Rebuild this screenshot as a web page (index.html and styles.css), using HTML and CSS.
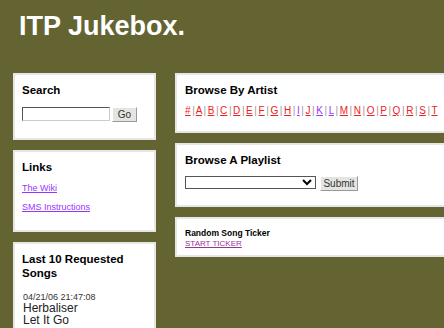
FILE: index.html
```html
<!DOCTYPE html>
<html lang="en">
<head>
    <meta charset="UTF-8">
    <title>ITP Jukebox.</title>
    <link rel="stylesheet" href="styles.css">
</head>
<body>
    <h1 class="site-title">ITP Jukebox.</h1>

    <div class="page">
        <!-- left column -->
        <div class="side">
            <div class="box search">
                <h2>Search</h2>
                <form class="search-form">
                    <input type="text" class="search-input">
                    <button type="button" class="btn">Go</button>
                </form>
            </div>

            <div class="box links">
                <h2>Links</h2>
                <p class="link-line"><a href="#" class="visited">The Wiki</a></p>
                <p class="link-line"><a href="#" class="visited">SMS Instructions</a></p>
            </div>

            <div class="box">
                <h2>Last 10 Requested Songs</h2>
                <div class="song">
                    <div class="song-date">04/21/06 21:47:08</div>
                    <div class="song-artist">Herbaliser</div>
                    <div class="song-title">Let It Go</div>
                </div>
            </div>
        </div>

        <!-- main column -->
        <div class="main">
            <div class="box artists">
                <h2>Browse By Artist</h2>
                <div class="letters">
                    <a href="#">#</a> | <a href="#">A</a> | <a href="#">B</a> | <a href="#">C</a> | <a href="#">D</a> | <a href="#">E</a> | <a href="#">F</a> | <a href="#">G</a> | <a href="#">H</a> | <a href="#" class="seen">I</a> | <a href="#">J</a> | <a href="#" class="seen">K</a> | <a href="#" class="seen">L</a> | <a href="#">M</a> | <a href="#">N</a> | <a href="#">O</a> | <a href="#">P</a> | <a href="#">Q</a> | <a href="#">R</a> | <a href="#">S</a> | <a href="#">T</a>
                </div>
            </div>

            <div class="box playlist">
                <h2>Browse A Playlist</h2>
                <form class="playlist-form">
                    <select class="playlist-select"><option></option></select>
                    <button type="button" class="btn">Submit</button>
                </form>
            </div>

            <div class="box ticker">
                <div class="ticker-title">Random Song Ticker</div>
                <a href="#" class="ticker-link">START TICKER</a>
            </div>
        </div>
    </div>
</body>
</html>
```

FILE: styles.css
```css
body {
    margin: 0;
    background-color: #646432;
    font-family: "Liberation Sans", Arial, sans-serif;
    overflow: hidden;
}

.site-title {
    margin: 0;
    padding: 10px 0 0 19px;
    height: 73px;
    box-sizing: border-box;
    font-size: 27px;
    line-height: 32px;
    color: #fff;
}

.page {
    display: flex;
    gap: 19px;
    padding-left: 13px;
    width: 620px;
}

.side {
    width: 143px;
    flex-shrink: 0;
}

.main {
    width: 400px;
    flex-shrink: 0;
}

.box {
    background-color: #fff;
    border: 2px solid #e6e6e6;
    box-sizing: border-box;
    padding: 8px 8px 14px 7px;
    margin-bottom: 10px;
}

.main .box {
    padding-left: 8px;
}

.box h2 {
    margin: 0;
    font-size: 11.5px;
    line-height: 14px;
    color: #000;
}

.search {
    height: 67px;
}

.search-form {
    display: flex;
    gap: 2px;
    margin-top: 10px;
}

.search-input {
    width: 88px;
    height: 14px;
    box-sizing: border-box;
    padding: 0;
    border: 1px solid #555;
    border-right-color: #ccc;
    border-bottom-color: #ccc;
}

.btn {
    font-family: "Liberation Sans", Arial, sans-serif;
    font-size: 10px;
    color: #333;
    padding: 0 5px;
    height: 15px;
    background-color: #e4e4e0;
    border: 1px solid #999;
    border-top-color: #fff;
    border-left-color: #fff;
    border-radius: 0;
}

.search-form .btn {
    width: 25px;
    padding: 0;
}

.links {
    height: 82px;
}

.link-line {
    margin: 9px 0 0 0;
    font-size: 9px;
}

.link-line + .link-line {
    margin-top: 9px;
}

.visited {
    color: #9933ff;
}

.song {
    margin-top: 13px;
    padding-left: 1px;
}

.song-date {
    font-size: 9px;
    line-height: 9px;
    color: #333;
}

.song-artist,
.song-title {
    font-size: 12px;
    line-height: 12px;
    color: #222;
}

.artists {
    height: 60px;
}

.letters {
    margin-top: 8px;
    font-size: 10px;
    word-spacing: -1.2px;
    color: #999;
    white-space: nowrap;
}

.letters a {
    color: #ee2222;
}

.letters a.seen {
    color: #9933ff;
}

.playlist {
    height: 64px;
}

.playlist-form {
    display: flex;
    gap: 4px;
    margin-top: 9px;
}

.playlist-select {
    width: 131px;
    height: 13px;
    padding: 0;
    font-size: 9px;
    border: 1px solid #555;
    background-color: #fff;
}

.playlist-form .btn {
    width: 38px;
    padding: 0;
    height: 15px;
}

.ticker {
    height: 40px;
    padding-top: 9px;
    font-size: 8.5px;
    line-height: 10px;
}

.ticker-title {
    font-weight: bold;
    color: #000;
}

.ticker-link {
    font-size: 8px;
    color: #993399;
}
```
